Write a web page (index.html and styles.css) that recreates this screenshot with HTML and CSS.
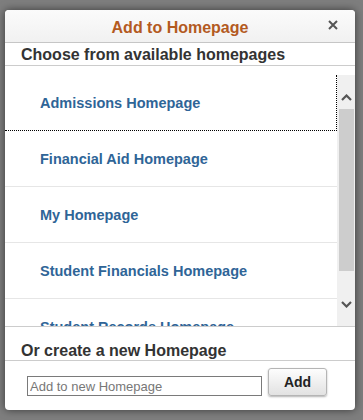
FILE: index.html
```html
<!DOCTYPE html>
<html>
<head>
<meta charset="utf-8">
<link rel="stylesheet" href="styles.css">
</head>
<body>
<div class="dialog">
  <div class="header">
    <span class="title">Add to Homepage</span>
    <span class="close">
      <svg width="10" height="10" viewBox="0 0 10 10"><path d="M1 1 L9 9 M9 1 L1 9" stroke="#555" stroke-width="2" fill="none"/></svg>
    </span>
  </div>
  <div class="section-head first">Choose from available homepages</div>
  <div class="list-wrap">
    <div class="list">
      <div class="item focused">Admissions Homepage</div>
      <div class="item">Financial Aid Homepage</div>
      <div class="item">My Homepage</div>
      <div class="item">Student Financials Homepage</div>
      <div class="item">Student Records Homepage</div>
    </div>
    <div class="scrollbar">
      <div class="sb-up">
        <svg width="11" height="7" viewBox="0 0 11 7"><path d="M1 6 L5.5 1.5 L10 6" stroke="#555" stroke-width="2.2" fill="none"/></svg>
      </div>
      <div class="sb-thumb"></div>
      <div class="sb-down">
        <svg width="11" height="7" viewBox="0 0 11 7"><path d="M1 1 L5.5 5.5 L10 1" stroke="#555" stroke-width="2.2" fill="none"/></svg>
      </div>
    </div>
  </div>
  <div class="section-head second">Or create a new Homepage</div>
  <div class="form-row">
    <input class="new-input" type="text" placeholder="Add to new Homepage">
    <button class="add-btn">Add</button>
  </div>
</div>
</body>
</html>
```

FILE: styles.css
```css
html, body {
  margin: 0;
  padding: 0;
}
body {
  background: #7e7e7e;
  width: 363px;
  height: 420px;
  overflow: hidden;
  font-family: "Liberation Sans", Arial, sans-serif;
  padding-top: 10px;
  padding-left: 5px;
  box-sizing: border-box;
}
.dialog {
  width: 350px;
  height: 400px;
  background: #fff;
  border-radius: 4px;
  box-shadow: 0 0 9px rgba(0, 0, 0, 0.55);
  display: flex;
  flex-direction: column;
  overflow: hidden;
}
.header {
  position: relative;
  height: 33px;
  padding-top: 3px;
  box-sizing: border-box;
  background: linear-gradient(#fbfbfb, #f1f1f1);
  border-bottom: 1px solid #c6c6c6;
  text-align: center;
}
.title {
  font-size: 16px;
  font-weight: bold;
  line-height: 30px;
  color: #b35a1f;
}
.close {
  position: absolute;
  right: 17px;
  top: 10px;
  width: 10px;
  height: 10px;
  display: flex;
}
.section-head {
  font-size: 16px;
  font-weight: bold;
  color: #333;
  padding-left: 16px;
  border-bottom: 1px solid #cccccc;
}
.section-head.first {
  padding-top: 2px;
  line-height: 20px;
}
.section-head.second {
  padding-top: 14px;
  line-height: 19px;
  border-top: 1px solid #cccccc;
}
.list-wrap {
  padding-top: 9px;
  height: 260px;
  box-sizing: border-box;
  display: flex;
}
.list {
  flex: 1;
  overflow: hidden;
}
.item {
  height: 56px;
  box-sizing: border-box;
  border-bottom: 1px solid #e6e6e6;
  padding-left: 35px;
  display: flex;
  align-items: center;
  font-size: 14.5px;
  font-weight: bold;
  color: #2f6597;
}
.item.focused {
  border-bottom: 1px dotted #000;
  border-right: 1px dotted #000;
}
.scrollbar {
  width: 18px;
  background: #f0f0f0;
  display: flex;
  flex-direction: column;
}
.sb-up {
  height: 34px;
  box-sizing: border-box;
  padding-top: 19px;
  padding-left: 4px;
}
.sb-up svg, .sb-down svg {
  display: block;
}
.sb-thumb {
  height: 162px;
  margin-left: 2px;
  margin-right: 1px;
  background: #cdcdcd;
}
.sb-down {
  flex: 1;
  box-sizing: border-box;
  padding-top: 30px;
  padding-left: 4px;
}
.form-row {
  display: flex;
  align-items: flex-end;
  padding-top: 7px;
  padding-left: 22px;
  gap: 6px;
}
.new-input {
  width: 235px;
  height: 20px;
  box-sizing: border-box;
  border: 1px solid #7a7a7a;
  padding: 0 2px;
  margin: 0;
  font-family: "Liberation Sans", Arial, sans-serif;
  font-size: 13px;
  color: #333;
  outline: none;
}
.new-input::placeholder {
  color: #777;
}
.add-btn {
  width: 59px;
  height: 28px;
  margin: 0;
  padding: 0;
  border: 1px solid #b5b5b5;
  border-radius: 3px;
  background: linear-gradient(#fdfdfd, #e2e2e2);
  box-shadow: 0 1px 2px rgba(0, 0, 0, 0.3);
  font-family: "Liberation Sans", Arial, sans-serif;
  font-size: 14px;
  font-weight: bold;
  color: #222;
}
```
